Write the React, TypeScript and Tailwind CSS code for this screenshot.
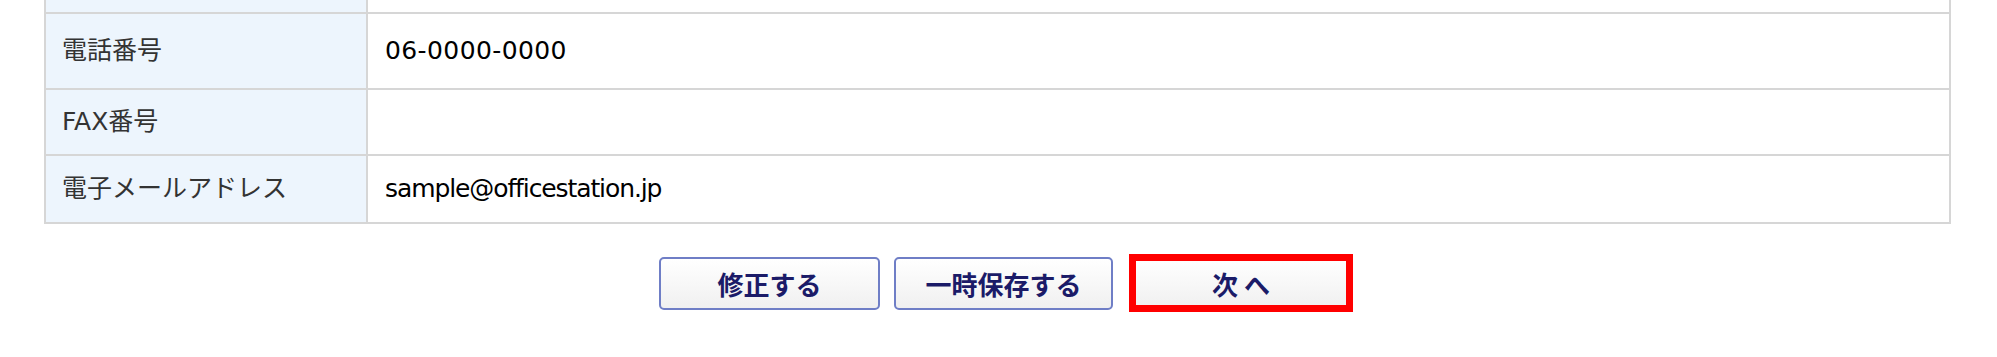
import React from "react";

const rows = [
  { label: "電話番号", value: "06-0000-0000", h: "h-[76px]", track: "tracking-[0.4px]" },
  { label: "FAX番号", value: "", h: "h-[66px]", track: "" },
  { label: "電子メールアドレス", value: "sample@officestation.jp", h: "h-[66px]", track: "tracking-[-1.1px]" },
];

function Btn({ children, w }: { children: React.ReactNode; w: string }) {
  return (
    <button
      className={`${w} h-[53px] rounded-[5px] border-2 border-[#6f7ec6] bg-linear-to-b from-white to-[#f0f0f0] text-[26px] font-bold text-[#1b1b68] font-['Noto_Sans_CJK_JP',sans-serif] flex items-center justify-center leading-none`}
    >
      {children}
    </button>
  );
}

export default function App() {
  return (
    <div className="w-[1997px] h-[357px] bg-white overflow-hidden font-['DejaVu_Sans','Noto_Sans_CJK_JP',sans-serif]">
      <div className="ml-[44px] w-[1907px] border-x-2 border-b-2 border-[#d6d6d6]">
        <div className="grid grid-cols-[322px_1fr] h-[14px] border-b-2 border-[#d6d6d6]">
          <div className="bg-[#edf5fd] border-r-2 border-[#d6d6d6]" />
          <div className="bg-white" />
        </div>
        {rows.map((r, i) => (
          <div
            key={r.label}
            className={`grid grid-cols-[322px_1fr] ${r.h} ${i < rows.length - 1 ? "border-b-2 border-[#d6d6d6]" : ""}`}
          >
            <div className="bg-[#edf5fd] border-r-2 border-[#d6d6d6] flex items-center pl-[16px] text-[25px] text-[#333333]">
              {r.label}
            </div>
            <div className={`bg-white flex items-center pl-[17px] text-[25px] text-black ${r.track}`}>
              {r.value}
            </div>
          </div>
        ))}
      </div>
      <div className="mt-[33px] flex justify-center pl-[13px]">
        <div className="mr-[14px]">
          <Btn w="w-[221px]">修正する</Btn>
        </div>
        <div className="mr-[18px]">
          <Btn w="w-[219px]">一時保存する</Btn>
        </div>
        <div className="relative">
          <Btn w="w-[220px]">次 へ</Btn>
          <div className="absolute -top-[3px] -bottom-[2px] -left-[2px] -right-[2px] border-[7px] border-[#ff0000] pointer-events-none" />
        </div>
      </div>
    </div>
  );
}
